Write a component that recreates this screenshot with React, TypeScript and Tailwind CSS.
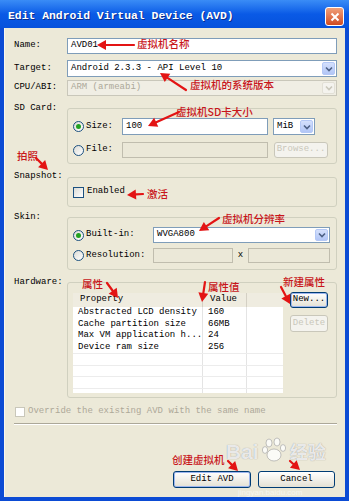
import React from "react";

const cjk = "font-['Noto_Sans_CJK_SC',sans-serif]";

type ArrowProps = { x1: number; y1: number; x2: number; y2: number };

function Arrow({ x1, y1, x2, y2 }: ArrowProps) {
  const dx = x2 - x1;
  const dy = y2 - y1;
  const len = Math.hypot(dx, dy);
  const ux = dx / len;
  const uy = dy / len;
  const hl = 9;
  const hw = 5;
  const bx = x2 - ux * hl;
  const by = y2 - uy * hl;
  const px = -uy;
  const py = ux;
  return (
    <g>
      <line x1={x1} y1={y1} x2={bx} y2={by} stroke="#e31414" strokeWidth={2.2} strokeLinecap="round" />
      <polygon
        points={`${x2},${y2} ${bx + px * hw},${by + py * hw} ${bx - px * hw},${by - py * hw}`}
        fill="#e31414"
      />
    </g>
  );
}

function DropBtn({ disabled }: { disabled?: boolean }) {
  return (
    <div className="h-full p-[1px]">
      <div
        className={
          disabled
            ? "w-[13px] h-full rounded-[2px] bg-[#f4f3ee] border border-[#e2e0d6] flex items-center justify-center"
            : "w-[13px] h-full rounded-[2px] bg-linear-to-b from-[#d4e0fc] to-[#b2c6f6] border border-[#b4c8f6] flex items-center justify-center"
        }
      >
        <svg width="8" height="6" viewBox="0 0 8 6">
          <path
            d="M1 1.5 L4 4.5 L7 1.5"
            fill="none"
            stroke={disabled ? "#c9c7ba" : "#4d6185"}
            strokeWidth="1.6"
          />
        </svg>
      </div>
    </div>
  );
}

function Combo({ value, disabled, className }: { value: string; disabled?: boolean; className?: string }) {
  return (
    <div
      className={
        "flex items-center border " +
        (disabled ? "bg-[#f0eee4] border-[#c9c7ba] text-[#aca899] " : "bg-white border-[#7f9db9] ") +
        (className ?? "")
      }
    >
      <span className="flex-1 pl-[3px] whitespace-nowrap overflow-hidden">{value}</span>
      <DropBtn disabled={disabled} />
    </div>
  );
}

function Radio({ checked, label, className }: { checked?: boolean; label: string; className?: string }) {
  return (
    <div className={"flex items-center " + (className ?? "")}>
      <div className="w-[11px] h-[11px] rounded-full border border-[#1c5180] bg-linear-to-br from-[#dcdcd6] to-white flex items-center justify-center">
        {checked && <div className="w-[5px] h-[5px] rounded-full bg-[#21a121]" />}
      </div>
      <span className="ml-[2px]">{label}</span>
    </div>
  );
}

function XpButton({
  label,
  disabled,
  focused,
  className,
}: {
  label: string;
  disabled?: boolean;
  focused?: boolean;
  className?: string;
}) {
  return (
    <div
      className={
        "flex items-center justify-center rounded-[3px] border " +
        (disabled
          ? "border-[#c9c7ba] bg-[#f4f3ee] text-[#c9c7ba] "
          : "border-[#003c74] bg-linear-to-b from-white to-[#e4e1d4] ") +
        (focused ? "shadow-[inset_0_0_0_1px_#9db6ee] " : "") +
        (className ?? "")
      }
    >
      {label}
    </div>
  );
}

const rows = [
  ["Abstracted LCD density", "160"],
  ["Cache partition size", "66MB"],
  ["Max VM application h...", "24"],
  ["Device ram size", "256"],
  ["", ""],
  ["", ""],
  ["", ""],
  ["", ""],
];

export default function App() {
  return (
    <div className="relative w-[349px] h-[501px] flex flex-col bg-[#0b4bd4] font-['Liberation_Mono',monospace] text-[9px] text-black overflow-hidden">
      {/* title bar */}
      <div className="h-[28px] flex items-center pt-[5px] pl-[8px] pr-[5px] bg-linear-to-b from-[#3a8cf6] via-[#0a5ae6] to-[#0651dc]">
        <span className="flex-1 text-white font-bold text-[11.4px] [text-shadow:1px_1px_0_#0a2d8c]">
          Edit Android Virtual Device (AVD)
        </span>
        <div className="w-[19px] h-[19px] rounded-[3px] border border-white bg-linear-to-b from-[#f0a07a] to-[#d04a20] flex items-center justify-center">
          <svg width="10" height="10" viewBox="0 0 10 10">
            <path d="M1.5 1.5 L8.5 8.5 M8.5 1.5 L1.5 8.5" stroke="white" strokeWidth="2" />
          </svg>
        </div>
      </div>

      {/* body */}
      <div className="flex-1 mx-[4px] mb-[4px] bg-[#ece9d8] border-l border-[#f8f6ee] pl-[9px] pr-[8px] pt-[10px] flex flex-col">
        <div className="flex items-center h-[16px]">
          <span className="w-[53px]">Name:</span>
          <div className="flex-1 h-full bg-white border border-[#7f9db9] pl-[3px] flex items-center">AVD01</div>
        </div>

        <div className="flex items-center h-[17px] mt-[6px]">
          <span className="w-[53px]">Target:</span>
          <Combo value="Android 2.3.3 - API Level 10" className="flex-1 h-full" />
        </div>

        <div className="flex items-center h-[16px] mt-[3px]">
          <span className="w-[53px]">CPU/ABI:</span>
          <Combo value="ARM (armeabi)" disabled className="flex-1 h-full" />
        </div>

        {/* SD card */}
        <div className="flex mt-[6px]">
          <span className="w-[53px] leading-[12px]">SD Card:</span>
          <div className="flex-1 mt-[6px] h-[56px] border border-[#d0d0bf] rounded-[3px] pl-[5px] pr-[6px] pt-[9px]">
            <div className="flex items-center h-[17px]">
              <Radio checked label="Size:" className="w-[49px]" />
              <div className="w-[146px] h-full bg-white border border-[#7f9db9] pl-[3px] flex items-center">100</div>
              <Combo value="MiB" className="ml-[5px] w-[42px] h-full" />
            </div>
            <div className="flex items-center h-[16px] mt-[7px]">
              <Radio label="File:" className="w-[49px]" />
              <div className="w-[146px] h-full bg-[#ebe8d8] border border-[#c0bdae]" />
              <XpButton label="Browse..." disabled className="ml-[6px] w-[54px] h-full" />
            </div>
          </div>
        </div>

        {/* snapshot */}
        <div className="flex mt-[6px]">
          <span className="w-[53px] leading-[12px]">Snapshot:</span>
          <div className="flex-1 mt-[7px] h-[30px] border border-[#d0d0bf] rounded-[3px] pl-[5px] flex items-center">
            <div className="w-[11px] h-[11px] border border-[#1c5180] bg-linear-to-br from-[#dcdcd6] to-white" />
            <span className="ml-[3px]">Enabled</span>
          </div>
        </div>

        {/* skin */}
        <div className="flex mt-[4px]">
          <span className="w-[53px] leading-[12px]">Skin:</span>
          <div className="flex-1 mt-[6px] h-[53px] border border-[#d0d0bf] rounded-[3px] pl-[5px] pr-[6px] pt-[9px]">
            <div className="flex items-center h-[16px]">
              <Radio checked label="Built-in:" className="w-[80px]" />
              <Combo value="WVGA800" className="flex-1 h-full" />
            </div>
            <div className="flex items-center h-[15px] mt-[5px]">
              <Radio label="Resolution:" className="w-[80px]" />
              <div className="w-[80px] h-full bg-[#ebe8d8] border border-[#c0bdae]" />
              <span className="w-[15px] text-center">x</span>
              <div className="flex-1 h-full bg-[#ebe8d8] border border-[#c0bdae]" />
            </div>
          </div>
        </div>

        {/* hardware */}
        <div className="flex mt-[6px]">
          <span className="w-[53px] leading-[12px]">Hardware:</span>
          <div className="flex-1 mt-[6px] h-[116px] border border-[#d0d0bf] rounded-[3px] pl-[5px] pt-[10px] flex">
            <div className="w-[210px]">
              <div className="flex h-[14px] items-center bg-[#efece0]">
                <span className="w-[130px] h-full flex items-center pl-[7px] border-r border-[#d4d0c4]">Property</span>
                <span className="w-[44px] h-full flex items-center pl-[7px] border-r border-[#d4d0c4]">Value</span>
              </div>
              <div className="h-[86px] bg-white overflow-hidden">
                {rows.map((r, i) => (
                  <div
                    key={i}
                    className={"flex h-[11.5px] items-center " + (i >= 4 ? "border-t border-[#ececec]" : "")}
                  >
                    <span className="w-[130px] h-full flex items-center pl-[5px] border-r border-[#e4e4e4] whitespace-nowrap">
                      {r[0]}
                    </span>
                    <span className="w-[44px] h-full flex items-center pl-[5px] border-r border-[#e4e4e4]">{r[1]}</span>
                  </div>
                ))}
              </div>
            </div>
            <div className="ml-[7px] w-[38px] -mt-[1px] flex flex-col">
              <XpButton label="New..." focused className="h-[16px]" />
              <XpButton label="Delete" disabled className="h-[17px] mt-[7px]" />
            </div>
          </div>
        </div>

        {/* override */}
        <div className="flex items-center h-[12px] mt-[8px] text-[#aca899]">
          <div className="ml-[1px] w-[10px] h-[10px] border border-[#c9c7ba] bg-white" />
          <span className="ml-[3px]">Override the existing AVD with the same name</span>
        </div>

        <div className="mt-[5px] border-t border-[#aca899] border-b border-b-white" />

        <div className="mt-[46px] flex justify-end gap-[7px] pr-[2px]">
          <XpButton label="Edit AVD" focused className="w-[78px] h-[17px]" />
          <XpButton label="Cancel" className="w-[77px] h-[17px]" />
        </div>
      </div>

      {/* watermark */}
      <div className="absolute left-[226px] top-[440px] text-[21px] leading-[24px] font-bold font-['Liberation_Sans',sans-serif] text-white/80 [text-shadow:0_0_1px_#8a8a8a] pointer-events-none">
        Bai
      </div>
      <svg className="absolute left-[262px] top-[437px] pointer-events-none" width="26" height="26" viewBox="0 0 26 26">
        <g fill="white" fillOpacity="0.8" stroke="#9a9a9a" strokeWidth="0.6">
          <ellipse cx="7" cy="6" rx="3" ry="4" />
          <ellipse cx="15" cy="5" rx="3" ry="4" />
          <ellipse cx="21" cy="11" rx="2.6" ry="3.4" />
          <ellipse cx="3" cy="13" rx="2.6" ry="3.4" />
          <ellipse cx="12" cy="18" rx="7" ry="6" />
        </g>
      </svg>
      <div className={"absolute left-[290px] top-[441px] text-[18px] leading-[20px] font-bold text-white/80 [text-shadow:0_0_1px_#8a8a8a] pointer-events-none " + cjk}>
        经验
      </div>
      <div className="absolute left-[238px] top-[489px] text-[8px] leading-none font-['Liberation_Sans',sans-serif] text-white/60 pointer-events-none">
        jingyan.baidu.com
      </div>

      {/* annotations */}
      <div className={"absolute inset-0 pointer-events-none text-[10.5px] leading-none font-medium text-[#c8161b] " + cjk}>
        <span className="absolute left-[137px] top-[39px]">虚拟机名称</span>
        <span className="absolute left-[190px] top-[80px]">虚拟机的系统版本</span>
        <span className="absolute left-[176px] top-[107px]">虚拟机SD卡大小</span>
        <span className="absolute left-[17px] top-[151px]">拍照</span>
        <span className="absolute left-[147px] top-[189px]">激活</span>
        <span className="absolute left-[222px] top-[214px]">虚拟机分辨率</span>
        <span className="absolute left-[82px] top-[279px]">属性</span>
        <span className="absolute left-[208px] top-[282px]">属性值</span>
        <span className="absolute left-[283px] top-[277px]">新建属性</span>
        <span className="absolute left-[172px] top-[455px]">创建虚拟机</span>
      </div>
      <svg className="absolute left-0 top-0 pointer-events-none" width="349" height="501" viewBox="0 0 349 501">
        <Arrow x1={134} y1={45} x2={97} y2={45} />
        <Arrow x1={186} y1={90} x2={160} y2={73} />
        <Arrow x1={179} y1={112} x2={148} y2={126} />
        <Arrow x1={36} y1={158} x2={48} y2={170} />
        <Arrow x1={143} y1={194} x2={127} y2={195} />
        <Arrow x1={219} y1={218} x2={199} y2={231} />
        <Arrow x1={107} y1={283} x2={118} y2={298} />
        <Arrow x1={205} y1={282} x2={202} y2={302} />
        <Arrow x1={281} y1={287} x2={290} y2={304} />
        <Arrow x1={228} y1={461} x2={238} y2={471} />
        <Arrow x1={290} y1={461} x2={300} y2={470} />
      </svg>
    </div>
  );
}
